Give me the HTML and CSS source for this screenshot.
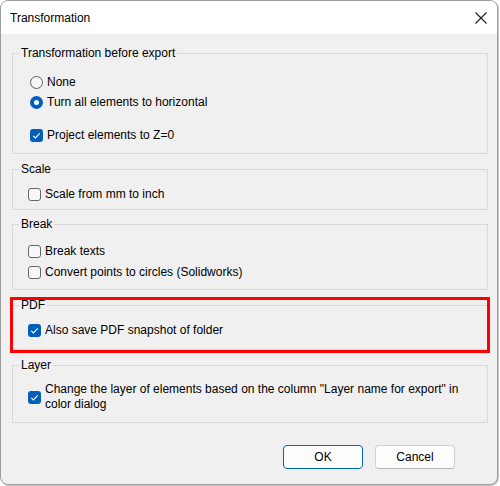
FILE: index.html
```html
<!DOCTYPE html>
<html>
<head>
<meta charset="utf-8">
<link rel="stylesheet" href="styles.css">
</head>
<body>
<div class="window">
  <div class="titlebar">
    <span class="title">Transformation</span>
    <svg class="close" width="12" height="12" viewBox="0 0 12 12"><path d="M0.5 0.5 L11.5 11.5 M11.5 0.5 L0.5 11.5" stroke="#1a1a1a" stroke-width="1.1" fill="none"/></svg>
  </div>
  <div class="content">
    <fieldset class="group g1">
      <legend>Transformation before export</legend>
      <div class="row wide"><span class="radio"></span><span class="label">None</span></div>
      <div class="row wide"><span class="radio on"></span><span class="label">Turn all elements to horizontal</span></div>
      <div class="row wide sep"><span class="check on"><svg width="13" height="13" viewBox="0 0 13 13"><path d="M3.3 6.8 L5.4 8.9 L9.7 4.4" stroke="#fff" stroke-width="1.1" fill="none"/></svg></span><span class="label">Project elements to Z=0</span></div>
    </fieldset>
    <fieldset class="group g2">
      <legend>Scale</legend>
      <div class="row"><span class="check"></span><span class="label">Scale from mm to inch</span></div>
    </fieldset>
    <fieldset class="group g3">
      <legend>Break</legend>
      <div class="row"><span class="check"></span><span class="label">Break texts</span></div>
      <div class="row next"><span class="check"></span><span class="label">Convert points to circles (Solidworks)</span></div>
    </fieldset>
    <div class="highlight">
      <fieldset class="group g4">
        <legend>PDF</legend>
        <div class="row"><span class="check on"><svg width="13" height="13" viewBox="0 0 13 13"><path d="M3.3 6.8 L5.4 8.9 L9.7 4.4" stroke="#fff" stroke-width="1.1" fill="none"/></svg></span><span class="label">Also save PDF snapshot of folder</span></div>
      </fieldset>
    </div>
    <fieldset class="group g5">
      <legend>Layer</legend>
      <div class="row multi"><span class="check on"><svg width="13" height="13" viewBox="0 0 13 13"><path d="M3.3 6.8 L5.4 8.9 L9.7 4.4" stroke="#fff" stroke-width="1.1" fill="none"/></svg></span><span class="label text">Change the layer of elements based on the column "Layer name for export" in color dialog</span></div>
    </fieldset>
    <div class="buttons">
      <button class="btn default">OK</button>
      <button class="btn">Cancel</button>
    </div>
  </div>
</div>
</body>
</html>
```
FILE: styles.css
```css
html, body {
  margin: 0;
  padding: 0;
  background: #ffffff;
}
body {
  width: 500px;
  height: 486px;
  overflow: hidden;
  font-family: "Liberation Sans", Arial, sans-serif;
  font-size: 12px;
  color: #000;
}
.window {
  box-sizing: border-box;
  width: 498px;
  height: 485px;
  border: 1px solid #9d9d9d;
  border-radius: 8px;
  background: #f0f0f0;
  box-shadow: 1px 1px 0 #c8c8c8;
  overflow: hidden;
}
.titlebar {
  height: 33px;
  background: #ffffff;
  display: flex;
  align-items: center;
  justify-content: space-between;
  padding: 0 9px 0 9px;
}
.title {
  font-size: 12px;
  color: #000;
}
.close {
  display: block;
  margin-right: 1px;
}
.content {
  display: flex;
  flex-direction: column;
}
.group {
  box-sizing: border-box;
  width: 476px;
  margin: 7px 0 0 11px;
  border: 1px solid #d9d9d9;
  padding: 0 6px;
  min-width: 0;
}
.group legend {
  padding: 0 2px;
  line-height: 16px;
  height: 16px;
}
.g1 { margin-top: 11px; padding-top: 11px; padding-bottom: 8px; }
.g2 { padding-top: 7px; padding-bottom: 5px; }
.g3 { margin-top: 6px; padding-top: 9px; padding-bottom: 7px; }
.g4 { margin: 0; padding-top: 7px; padding-bottom: 9px; }
.g5 { padding-top: 9px; padding-bottom: 10px; }
.highlight {
  position: relative;
  width: 476px;
  margin: 7px 0 0 11px;
}
.highlight::after {
  content: "";
  position: absolute;
  left: -2px;
  right: -2px;
  top: 0;
  bottom: -3px;
  border: 3px solid #ff0000;
}
.row {
  display: flex;
  align-items: center;
  height: 20px;
  padding-left: 9px;
}
.row.wide { padding-left: 11px; }
.row.sep { margin-top: 13px; }
.row.next { margin-top: 1px; }
.row.multi { height: auto; }
.label {
  margin-left: 4px;
  white-space: nowrap;
}
.label.text {
  white-space: normal;
  width: 420px;
  line-height: 15px;
}
.check, .radio {
  box-sizing: border-box;
  width: 13px;
  height: 13px;
  flex: none;
  display: block;
}
.check {
  border: 1px solid #666666;
  border-radius: 3px;
  background: #f7f7f7;
}
.check.on {
  border: none;
  background: #005fb8;
}
.check svg { display: block; }
.radio {
  border: 1px solid #5c5c5c;
  border-radius: 50%;
  background: #f7f7f7;
}
.radio.on {
  border: none;
  background: #005fb8;
  display: flex;
  align-items: center;
  justify-content: center;
}
.radio.on::after {
  content: "";
  width: 5px;
  height: 5px;
  border-radius: 50%;
  background: #ffffff;
}
.buttons {
  display: flex;
  justify-content: flex-end;
  gap: 12px;
  margin-top: 22px;
  padding-right: 42px;
}
.btn {
  box-sizing: border-box;
  width: 80px;
  height: 24px;
  font-family: "Liberation Sans", Arial, sans-serif;
  font-size: 12px;
  color: #000;
  background: #fdfdfd;
  border: 1px solid #d0d0d0;
  border-bottom-color: #b8b8b8;
  border-radius: 4px;
  padding: 0;
}
.btn.default {
  border: 1px solid #0067c0;
}
```
